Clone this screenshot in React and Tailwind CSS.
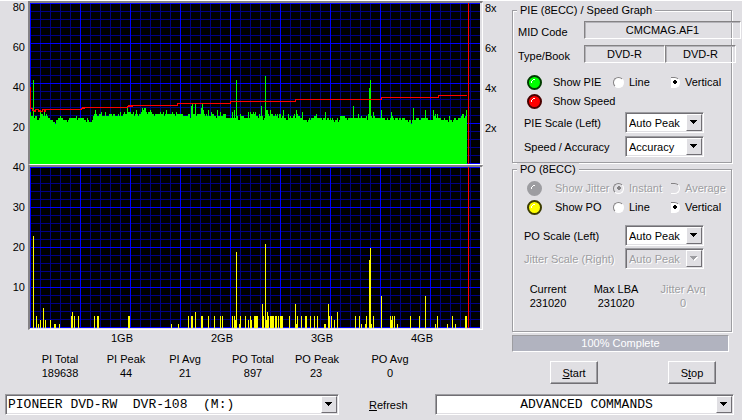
import React, { useState } from "react";

/* PIE level per column, one base-36 digit each, counted upward from 20. */
const PIE_LEVELS = [
  "64423442236554645433222110223343322221233333334233",
  "33332213211124575445564446444555455444546445655966",
  "65564575455687886566765545555565564575555565546555",
  "555444445539a55a455558a754547446554437446445553333",
  "33637394225444333363655656443549423677547554454535",
  "53473322534334537544336222212323334453333323362332",
  "32321223124444433233333933335334333342544436433333",
  "37333223223643233323323332221220282233322333373322",
  "2227453533322232221422123322333455347",
].join("");

const PIE_PEAKS = [[3, 42], [206, 42], [235, 44], [339, 38], [340, 42]];

/* PO errors: [column, level] */
const PO_BARS = [
  [3, 23], [6, 3], [8, 1], [10, 2], [13, 5], [15, 2], [20, 2], [24, 1], [25, 1], [29, 1],
  [41, 3], [42, 4], [44, 3], [48, 3], [64, 3], [67, 3], [68, 3], [98, 3], [99, 3], [141, 1],
  [148, 1], [158, 3], [161, 3], [162, 3], [165, 4], [171, 3], [172, 3], [178, 3], [184, 3],
  [190, 3], [192, 3], [202, 3], [204, 3], [205, 2], [206, 19], [209, 1], [210, 3], [215, 3],
  [218, 2], [220, 3], [221, 2], [224, 3], [225, 3], [226, 3], [227, 3], [232, 6], [233, 3],
  [235, 21], [236, 2], [237, 4], [238, 3], [240, 3], [241, 3], [242, 3], [243, 3], [245, 3],
  [246, 3], [248, 3], [250, 3], [251, 3], [252, 3], [259, 3], [265, 6], [266, 1], [267, 3],
  [271, 3], [275, 3], [276, 3], [280, 3], [284, 3], [287, 3], [294, 1], [295, 1], [298, 6],
  [299, 3], [301, 3], [304, 2], [307, 4], [325, 3], [329, 3], [331, 1], [335, 1], [336, 3],
  [339, 17], [340, 20], [341, 1], [343, 3], [351, 8], [360, 3], [361, 2], [362, 3], [364, 3],
  [367, 1], [380, 3], [389, 3], [395, 8], [405, 1], [407, 3], [417, 1], [422, 3], [425, 1],
  [435, 3], [436, 3],
];

/* Read speed: [first column, row] steps up to column 436 */
const SPEED_STEPS = [
  [1, 105], [2, 107], [4, 108], [5, 106], [8, 108], [9, 107], [10, 108], [12, 106], [14, 108],
  [15, 106], [51, 105], [52, 104], [53, 105], [54, 104], [97, 103], [98, 102], [99, 103],
  [100, 102], [101, 103], [102, 102], [147, 100], [200, 98], [265, 96], [351, 94], [408, 92], [436, 92],
];

const bar = (x, h) => `M${x} 161h1v-${h}h-1z`;

const piePath =
  [...PIE_LEVELS].map((c, i) => bar(i, (20 + parseInt(c, 36)) * 2)).join("") +
  PIE_PEAKS.map(([x, v]) => bar(x, v * 2)).join("");
const poPath = PO_BARS.map(([x, v]) => bar(x, v * 4)).join("");
const speedPath =
  "M0.5 84V103.5" +
  SPEED_STEPS.map(([x, y], i) => (i ? `H${x + 0.5}V${y + 0.5}` : `V${y + 0.5}`)).join("");

function Grid() {
  const v = Array.from({ length: 45 }, (_, i) => i);
  const h = Array.from({ length: 21 }, (_, i) => i);
  const vLine = (i) => `M${i * 10}.5 0V161`;
  const hLine = (i) => `M0 ${i * 8}.5H450`;
  return (
    <>
      <path
        stroke="#000084"
        d={v.filter((i) => i % 5).map(vLine).join("") + h.filter((i) => i % 5).map(hLine).join("")}
      />
      <path
        stroke="#0000ff"
        d={v.filter((i) => i % 5 === 0).map(vLine).join("") + h.filter((i) => i % 5 === 0).map(hLine).join("")}
      />
    </>
  );
}

function Plot({ label, className, children }) {
  return (
    <div className={`border-t-2 border-l-2 border-r border-b border-t-[#848284] border-l-[#848284] border-r-white border-b-white ${className}`}>
      <svg
        role="img"
        aria-label={label}
        viewBox="0 0 450 161"
        preserveAspectRatio="none"
        shapeRendering="crispEdges"
        fill="none"
        className="block h-[161px] w-full bg-black"
      >
        <Grid />
        {children}
        <path d="M438.5 0V161" stroke="#ff0000" />
      </svg>
    </div>
  );
}

const SUNKEN =
  "border border-t-[#9d9da1] border-l-[#9d9da1] border-r-white border-b-white shadow-[inset_1px_1px_#716f74,inset_-1px_-1px_#e0dfe3]";
const EMBOSSED = "text-[#9d9da1] [text-shadow:1px_1px_0_white]";

function Combo({ id, label, options, disabled, className = "", selectClass = "text-[11px] pl-[3px]" }) {
  return (
    <div className={`relative ${className}`}>
      <select
        id={id}
        aria-label={label}
        disabled={disabled}
        className={`block h-[21px] w-full appearance-none rounded-none pr-[18px] opacity-100 outline-none ${SUNKEN} ${
          disabled ? `bg-[#e0dfe3] ${EMBOSSED}` : "bg-white text-black"
        } ${selectClass}`}
      >
        {options.map((o) => (
          <option key={o}>{o}</option>
        ))}
      </select>
      <span className="pointer-events-none absolute top-[2px] right-[2px] bottom-[2px] flex w-4 items-center justify-center border border-t-white border-l-white border-r-[#716f74] border-b-[#716f74] bg-[#e0dfe3]">
        <svg viewBox="0 0 8 5" shapeRendering="crispEdges" className="h-[5px] w-2">
          {disabled && <path d="M2 1h6v1h-1v1h-1v1h-1v1h-1z" fill="#fff" />}
          <path d="M0 0h7v1h-1v1h-1v1h-1v1h-1v-1h-1v-1h-1v-1h-1z" fill={disabled ? "#9d9da1" : "#000"} />
        </svg>
      </span>
    </div>
  );
}

function Led({ color, label, disabled, gap = "gap-[11px]" }) {
  return (
    <label className={`flex items-center whitespace-nowrap ${gap} ${disabled ? EMBOSSED : ""}`}>
      <span className="grid">
        <input
          type="checkbox"
          defaultChecked={!disabled}
          disabled={disabled}
          className={`col-start-1 row-start-1 size-[15px] appearance-none rounded-full border-2 ${color}`}
        />
        <svg viewBox="0 0 15 15" shapeRendering="crispEdges" className="pointer-events-none col-start-1 row-start-1 size-[15px]">
          <path d="M4 6h1v2h-1zM5 5h1v1h-1zM6 4h2v1h-2z" fill="#fff" />
        </svg>
      </span>
      {label}
    </label>
  );
}

function Radio({ name, label, checked, onChange, disabled, cut }) {
  return (
    <label className={`flex items-center gap-[5px] ${disabled ? EMBOSSED : ""}`}>
      <span className="grid">
        <input
          type="radio"
          name={name}
          checked={checked}
          onChange={onChange}
          disabled={disabled}
          className={`col-start-1 row-start-1 h-[11px] appearance-none border border-white border-t-[#848284] ${
            cut ? "w-[9px] rounded-r-full border-l-0" : "w-[11px] rounded-full border-l-[#848284]"
          } ${disabled ? "bg-[#e0dfe3]" : "bg-white"}`}
        />
        {checked && (
          <svg
            viewBox="0 0 4 4"
            shapeRendering="crispEdges"
            className={`pointer-events-none col-start-1 row-start-1 size-1 self-center ${cut ? "ml-[2px]" : "ml-[4px]"}`}
          >
            <path d="M1 0h2v1h1v2h-1v1h-2v-1h-1v-2h1z" fill={disabled ? "#848284" : "#000"} />
          </svg>
        )}
      </span>
      {label}
    </label>
  );
}

function RadioPair({ name, options, disabled, initial }) {
  const [value, setValue] = useState(initial);
  return options.map((o, i) => (
    <Radio
      key={o}
      name={name}
      label={o}
      cut={i === 1}
      disabled={disabled}
      checked={value === o}
      onChange={() => setValue(o)}
    />
  ));
}

function Group({ title, children, className }) {
  return (
    <fieldset className={`mr-[10px] min-w-0 border border-[#9d9da1] shadow-[1px_1px_white,inset_1px_1px_white] ${className}`}>
      <legend className="ml-1 bg-[#e0dfe3] px-[3px] leading-3">{title}</legend>
      {children}
    </fieldset>
  );
}

const TOGGLE_ROW = "grid grid-cols-[86px_58px_1fr] items-center pl-[14px]";
const FIELD =
  "border border-t-[#848284] border-l-[#848284] border-r-white border-b-white shadow-[inset_1px_1px_#b4b3b8] bg-transparent text-center h-[18px] min-w-0 outline-none";
const BUTTON =
  "h-[23px] w-12 border border-t-white border-l-white border-r-[#716f74] border-b-[#716f74] shadow-[inset_-1px_-1px_#9d9da1]";

function ScaleRow({ id, label, options, disabled, className }) {
  return (
    <div className={`flex items-center justify-between pr-[27px] pl-[11px] ${className}`}>
      <label htmlFor={id} className={disabled ? EMBOSSED : ""}>
        {label}
      </label>
      <Combo id={id} options={options} disabled={disabled} className="w-[79px]" />
    </div>
  );
}

function Readout({ label, value, className = "" }) {
  return (
    <div className={className}>
      <dt>{label}</dt>
      <dd>{value}</dd>
    </div>
  );
}

export default function App() {
  return (
    <main className="min-h-screen w-full border-t border-white bg-[#e0dfe3] font-['Liberation_Sans',Arial,sans-serif] text-[11px] leading-[14px] text-black">
      <div className="flex items-start">
        <section className="min-w-0 flex-1">
          <div className="flex">
            <ul className="w-[28px] pr-[3px] text-right leading-3">
              {[80, 60, 40, 20, 40, 30, 20, 10].map((n, i) => (
                <li key={i} className="h-10">{n}</li>
              ))}
            </ul>
            <div className="min-w-0 flex-1">
              <Plot label="PIE and read speed" className="pr-[2px]">
                <path d={piePath} fill="#00ff00" />
                <path d={speedPath} stroke="#ff0000" />
              </Plot>
              <Plot label="PO" className="pr-[2px] pb-px">
                <path d={poPath} fill="#ffff00" />
              </Plot>
            </div>
            <ul className="w-[29px] pl-[2px]">
              {["8x", "6x", "4x", "2x"].map((n) => (
                <li key={n} className="h-10">{n}</li>
              ))}
            </ul>
          </div>
          <ul className="grid grid-cols-4 pr-10 pl-[72px] text-center leading-4">
            {["1GB", "2GB", "3GB", "4GB"].map((n) => (
              <li key={n}>{n}</li>
            ))}
          </ul>
          <dl className="mt-[6px] grid grid-cols-[66px_66px_52px_84px_42px_106px] pl-[27px] text-center whitespace-nowrap">
            <Readout label="PI Total" value="189638" />
            <Readout label="PI Peak" value="44" />
            <Readout label="PI Avg" value="21" />
            <Readout label="PO Total" value="897" />
            <Readout label="PO Peak" value="23" />
            <Readout label="PO Avg" value="0" />
          </dl>
        </section>

        <section className="w-[230px] shrink-0 pt-[3px]">
          <Group title="PIE (8ECC) / Speed Graph" className="pb-[5px]">
            <div className="-mr-[10px] flex items-end pt-[5px] pl-[5px]">
              <label htmlFor="mid" className="w-[66px]">MID Code</label>
              <input id="mid" readOnly value="CMCMAG.AF1" className={`flex-1 ${FIELD}`} />
            </div>
            <div className="-mr-[5px] mt-[6px] flex items-end pl-[5px]">
              <label htmlFor="type" className="w-[66px]">Type/Book</label>
              <input id="type" readOnly value="DVD-R" className={`w-[81px] ${FIELD}`} />
              <input aria-label="Book" readOnly value="DVD-R" className={`flex-1 ${FIELD}`} />
            </div>
            <div className={`mt-[9px] h-5 ${TOGGLE_ROW}`}>
              <Led color="border-[#003c00] bg-[#00ff00]" label="Show PIE" />
              <RadioPair name="pie" options={["Line", "Vertical"]} initial="Vertical" />
            </div>
            <div className={`h-[18px] ${TOGGLE_ROW}`}>
              <Led color="border-[#4a0000] bg-[#ff0000]" label="Show Speed" />
            </div>
            <ScaleRow id="pie-scale" label="PIE Scale (Left)" options={["Auto Peak"]} className="mt-[2px]" />
            <ScaleRow id="accuracy" label="Speed / Accuracy" options={["Accuracy"]} className="mt-[3px]" />
          </Group>

          <Group title="PO (8ECC)" className="pb-[21px]">
            <div className={`mt-[4px] h-[18px] ${TOGGLE_ROW}`}>
              <Led color="border-[#9d9da1] bg-[#9d9da1]" label="Show Jitter" gap="gap-[13px]" disabled />
              <RadioPair name="jitter" options={["Instant", "Average"]} initial="Instant" disabled />
            </div>
            <div className={`h-5 ${TOGGLE_ROW}`}>
              <Led color="border-[#3c3c00] bg-[#ffff00]" label="Show PO" gap="gap-[13px]" />
              <RadioPair name="po" options={["Line", "Vertical"]} initial="Vertical" />
            </div>
            <ScaleRow id="po-scale" label="PO Scale (Left)" options={["Auto Peak"]} className="mt-[8px]" />
            <ScaleRow id="jitter-scale" label="Jitter Scale (Right)" options={["Auto Peak"]} className="mt-[2px]" disabled />
            <dl className="mt-[13px] grid grid-cols-[70px_66px_68px] text-center">
              <Readout label="Current" value="231020" />
              <Readout label="Max LBA" value="231020" />
              <Readout label="Jitter Avq" value="0" className={EMBOSSED} />
            </dl>
          </Group>

          <div
            role="progressbar"
            aria-valuenow={100}
            className="mt-[3px] mr-[13px] h-[17px] border border-t-[#9d9da1] border-l-[#9d9da1] border-r-white border-b-white bg-[#b1b3bf] text-center leading-[15px] text-white"
          >
            100% Complete
          </div>
          <div className="mt-[9px] flex justify-between pr-[26px] pl-[38px]">
            <button type="button" className={BUTTON}>
              <u>S</u>tart
            </button>
            <button type="button" className={BUTTON}>
              S<u>t</u>op
            </button>
          </div>
        </section>
      </div>

      <div className="mt-[10px] flex items-center pr-2 pb-[5px] pl-[5px]">
        <Combo
          label="Drive"
          options={["PIONEER DVD-RW\u00a0 DVR-108\u00a0 (M:)"]}
          className="min-w-0 flex-[334]"
          selectClass="pl-[2px] font-['Liberation_Mono',monospace] text-[13px]"
        />
        <button type="button" className="w-[96px] pl-[30px] text-left">
          <u>R</u>efresh
        </button>
        <Combo
          label="Advanced commands"
          options={["ADVANCED COMMANDS"]}
          className="min-w-0 flex-[299]"
          selectClass="pl-[22px] [text-align-last:center] font-['Liberation_Mono',monospace] text-[13px]"
        />
      </div>
    </main>
  );
}
